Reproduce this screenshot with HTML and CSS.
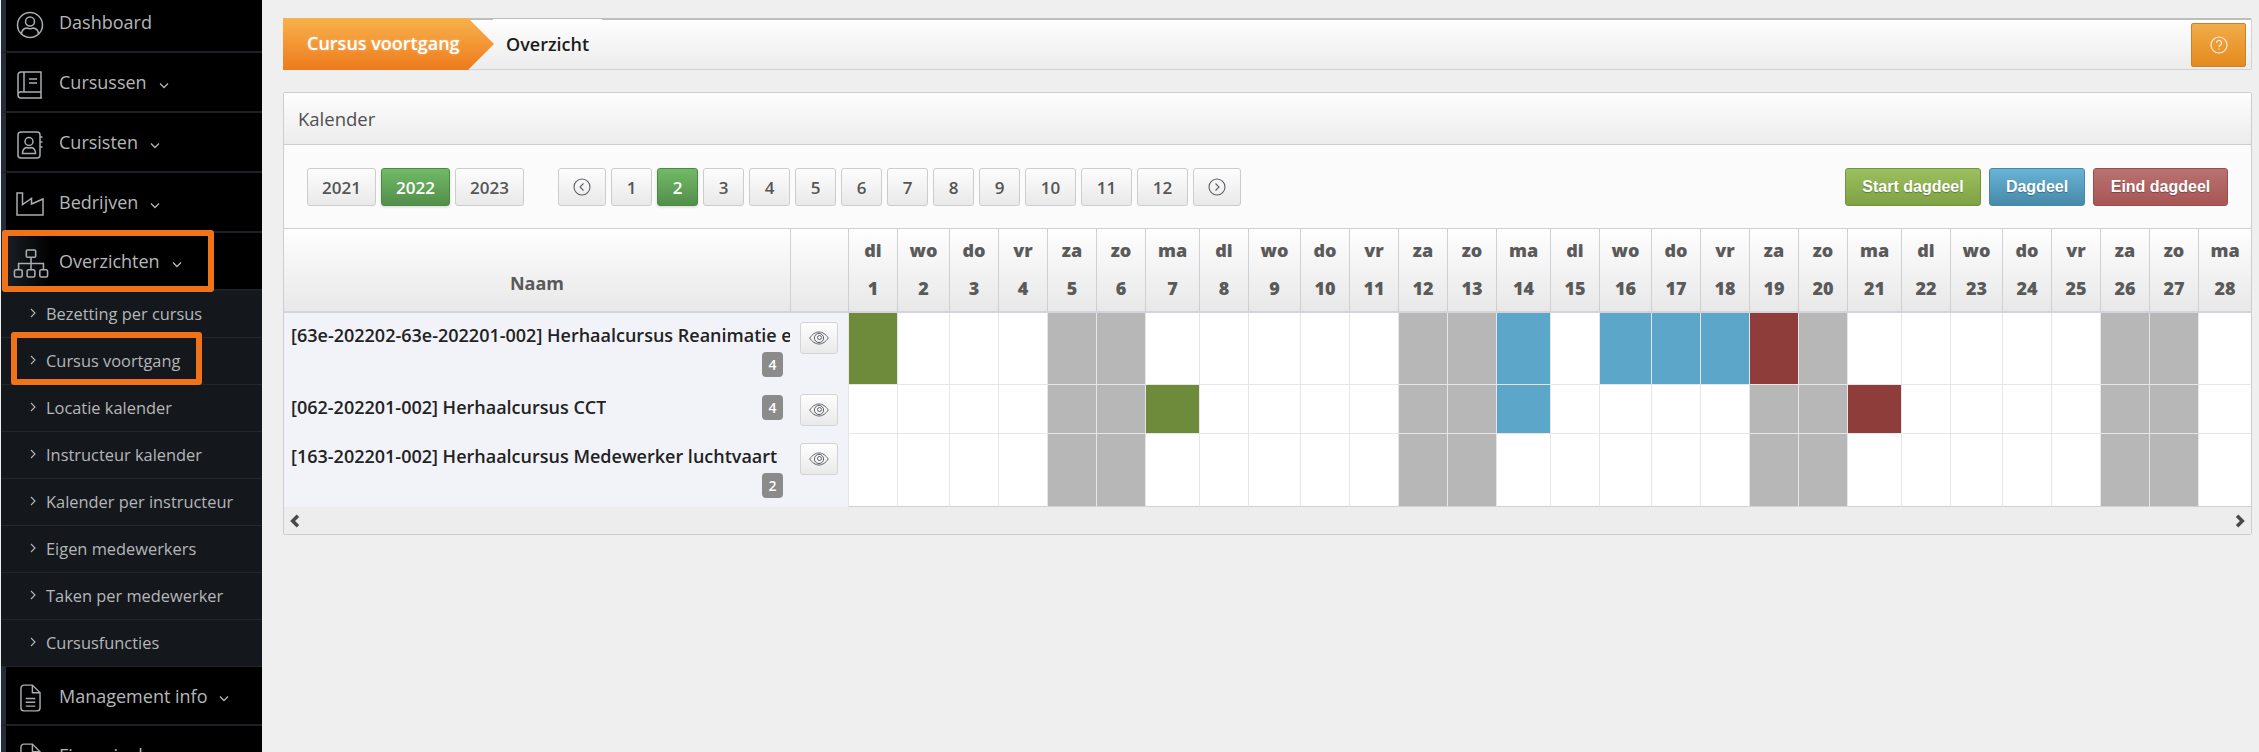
FILE: index.html
```html
<!DOCTYPE html>
<html lang="nl">
<head>
    <meta charset="UTF-8">
    <title>Cursus voortgang</title>
    <link rel="stylesheet" href="styles.css">
</head>
<body>
<svg class="defs" width="0" height="0">
    <symbol id="down" viewBox="0 0 10 6"><path d="M1 1l4 4 4-4"/></symbol>
    <symbol id="right" viewBox="0 0 6 10"><path d="M1 1l4 4-4 4"/></symbol>
    <symbol id="eye" viewBox="0 0 20 16"><path d="M.7 8c2.500-3.700 5.700-6 9.300-6s6.800 2.300 9.300 6c-2.500 3.700-5.700 6-9.300 6S3.200 11.700.7 8z"/><circle cx="10" cy="8" r="4.600"/><circle class="fill" cx="10.500" cy="7.500" r="2"/></symbol>
    <symbol id="doc" viewBox="0 0 22 29"><path d="M4 1h9l8 8v16a3 3 0 0 1-3 3H4a3 3 0 0 1-3-3V4a3 3 0 0 1 3-3z"/><path d="M13 1v8h8M6 15h10M6 19h10M6 23h10"/></symbol>
</svg>

<aside class="sidebar">
    <nav class="side-nav">
        <a class="side-item first">
            <svg class="side-icon" viewBox="0 0 28 28"><circle cx="14" cy="14" r="12.500"/><circle cx="14" cy="10.500" r="4.500"/><path d="M5.500 23.500c0-3.800 2.500-6 5-6.500 2.300 1 4.700 1 7 0 2.500.5 5 2.700 5 6.500"/></svg>
            <span>Dashboard</span>
        </a>
        <a class="side-item">
            <svg class="side-icon" viewBox="0 0 28 28"><path d="M5 1h20v20H6a3 3 0 0 0-4 3V4a3 3 0 0 1 3-3zM2 24a3 3 0 0 0 3 3h21M25 21v6M8 1v20M13 8h8M13 12h8"/></svg>
            <span>Cursussen</span>
            <svg class="caret"><use href="#down"/></svg>
        </a>
        <a class="side-item">
            <svg class="side-icon" viewBox="0 0 28 28"><rect x="2" y="1" width="22" height="26" rx="3"/><circle cx="13" cy="10.500" r="4"/><path d="M6.500 22.500c0-3.500 2-5.500 4-6 1.500.6 3.500.6 5 0 2 .5 4 2.500 4 6zM24 6h2.500M24 11h2.500M24 16h2.500"/></svg>
            <span>Cursisten</span>
            <svg class="caret"><use href="#down"/></svg>
        </a>
        <a class="side-item">
            <svg class="side-icon wide" viewBox="0 0 28 24"><path d="M1 1h5.500v11.500l9-6v5.500L27 7v16H1z"/></svg>
            <span>Bedrijven</span>
            <svg class="caret"><use href="#down"/></svg>
        </a>
        <a class="side-item open">
            <svg class="side-icon sitemap" viewBox="0 0 34 28"><rect x="12.500" y="1" width="9" height="7" rx="1"/><path d="M17 8v12M5 20v-6h24v6"/><rect x="1" y="20" width="7.500" height="7" rx="1.500"/><rect x="13.250" y="20" width="7.500" height="7" rx="1.500"/><rect x="25.500" y="20" width="7.500" height="7" rx="1.500"/></svg>
            <span>Overzichten</span>
            <svg class="caret"><use href="#down"/></svg>
        </a>
        <ul class="sub-nav">
            <li><svg class="sub-caret"><use href="#right"/></svg>Bezetting per cursus</li>
            <li><svg class="sub-caret"><use href="#right"/></svg>Cursus voortgang</li>
            <li><svg class="sub-caret"><use href="#right"/></svg>Locatie kalender</li>
            <li><svg class="sub-caret"><use href="#right"/></svg>Instructeur kalender</li>
            <li><svg class="sub-caret"><use href="#right"/></svg>Kalender per instructeur</li>
            <li><svg class="sub-caret"><use href="#right"/></svg>Eigen medewerkers</li>
            <li><svg class="sub-caret"><use href="#right"/></svg>Taken per medewerker</li>
            <li><svg class="sub-caret"><use href="#right"/></svg>Cursusfuncties</li>
        </ul>
        <a class="side-item after-sub">
            <svg class="side-icon doc"><use href="#doc"/></svg>
            <span>Management info</span>
            <svg class="caret"><use href="#down"/></svg>
        </a>
        <a class="side-item">
            <svg class="side-icon doc"><use href="#doc"/></svg>
            <span>Financieel</span>
        </a>
    </nav>
    <div class="mark mark-main"></div>
    <div class="mark mark-sub"></div>
</aside>

<main class="content">
    <div class="crumbs">
        <div class="crumb-active">Cursus voortgang</div>
        <div class="crumb-text">Overzicht</div>
        <button class="help-btn">
            <svg viewBox="0 0 18 18"><circle cx="9" cy="9" r="8"/><path d="M6.500 7a2.500 2.500 0 1 1 3.800 2.100C9.400 9.700 9 10.100 9 11M9 12.600v1.200"/></svg>
        </button>
    </div>

    <section class="panel">
        <h2 class="panel-head">Kalender</h2>
        <div class="toolbar">
            <div class="btn-row">
                <button class="btn">2021</button>
                <button class="btn on">2022</button>
                <button class="btn">2023</button>
            </div>
            <div class="btn-row months">
                <button class="btn nav"><svg viewBox="0 0 18 18"><circle cx="9" cy="9" r="8"/><path d="M10.500 5.500L7 9l3.500 3.500"/></svg></button>
                <button class="btn month">1</button>
                <button class="btn month on">2</button>
                <button class="btn month">3</button>
                <button class="btn month">4</button>
                <button class="btn month">5</button>
                <button class="btn month">6</button>
                <button class="btn month">7</button>
                <button class="btn month">8</button>
                <button class="btn month">9</button>
                <button class="btn month long">10</button>
                <button class="btn month long">11</button>
                <button class="btn month long">12</button>
                <button class="btn nav"><svg viewBox="0 0 18 18"><circle cx="9" cy="9" r="8"/><path d="M7.500 5.500L11 9l-3.500 3.500"/></svg></button>
            </div>
            <div class="btn-row legend">
                <button class="btn-key start">Start dagdeel</button>
                <button class="btn-key mid">Dagdeel</button>
                <button class="btn-key end">Eind dagdeel</button>
            </div>
        </div>

        <table class="cal">
            <thead>
                <tr>
                    <th class="col-name">Naam</th><th class="col-act"></th>
                    <th class="di">di<br>1</th><th class="wo">wo<br>2</th><th class="dg">do<br>3</th><th class="dg">vr<br>4</th><th class="dg">za<br>5</th><th class="dg">zo<br>6</th><th class="ma">ma<br>7</th>
                    <th class="di">di<br>8</th><th class="wo">wo<br>9</th><th class="dg">do<br>10</th><th class="dg">vr<br>11</th><th class="dg">za<br>12</th><th class="dg">zo<br>13</th><th class="ma">ma<br>14</th>
                    <th class="di">di<br>15</th><th class="wo">wo<br>16</th><th class="dg">do<br>17</th><th class="dg">vr<br>18</th><th class="dg">za<br>19</th><th class="dg">zo<br>20</th><th class="ma">ma<br>21</th>
                    <th class="di">di<br>22</th><th class="wo">wo<br>23</th><th class="dg">do<br>24</th><th class="dg">vr<br>25</th><th class="dg">za<br>26</th><th class="dg">zo<br>27</th><th class="ma last">ma<br>28</th>
                </tr>
            </thead>
            <tbody>
                <tr class="row-a">
                    <td class="name"><div class="name-wrap"><span class="name-text">[63e-202202-63e-202201-002] Herhaalcursus Reanimatie en AED</span><span class="badge">4</span></div></td>
                    <td class="act"><button class="eye-btn"><svg><use href="#eye"/></svg></button></td>
                    <td class="st"></td><td></td><td></td><td></td><td class="we"></td><td class="we"></td><td></td>
                    <td></td><td></td><td></td><td></td><td class="we"></td><td class="we"></td><td class="dd"></td>
                    <td></td><td class="dd"></td><td class="dd"></td><td class="dd"></td><td class="ed"></td><td class="we"></td><td></td>
                    <td></td><td></td><td></td><td></td><td class="we"></td><td class="we"></td><td></td>
                </tr>
                <tr class="row-b">
                    <td class="name"><div class="name-wrap"><span class="name-text">[062-202201-002] Herhaalcursus CCT</span><span class="badge">4</span></div></td>
                    <td class="act"><button class="eye-btn"><svg><use href="#eye"/></svg></button></td>
                    <td></td><td></td><td></td><td></td><td class="we"></td><td class="we"></td><td class="st"></td>
                    <td></td><td></td><td></td><td></td><td class="we"></td><td class="we"></td><td class="dd"></td>
                    <td></td><td></td><td></td><td></td><td class="we"></td><td class="we"></td><td class="ed"></td>
                    <td></td><td></td><td></td><td></td><td class="we"></td><td class="we"></td><td></td>
                </tr>
                <tr class="row-c">
                    <td class="name"><div class="name-wrap"><span class="name-text">[163-202201-002] Herhaalcursus Medewerker luchtvaart</span><span class="badge">2</span></div></td>
                    <td class="act"><button class="eye-btn"><svg><use href="#eye"/></svg></button></td>
                    <td></td><td></td><td></td><td></td><td class="we"></td><td class="we"></td><td></td>
                    <td></td><td></td><td></td><td></td><td class="we"></td><td class="we"></td><td></td>
                    <td></td><td></td><td></td><td></td><td class="we"></td><td class="we"></td><td></td>
                    <td></td><td></td><td></td><td></td><td class="we"></td><td class="we"></td><td></td>
                </tr>
            </tbody>
        </table>
        <div class="scrollbar">
            <svg viewBox="0 0 12 12"><path d="M8.500 1.500L4 6l4.500 4.500"/></svg>
            <svg viewBox="0 0 12 12"><path d="M3.500 1.500L8 6l-4.500 4.500"/></svg>
        </div>
    </section>
</main>
</body>
</html>
```

FILE: styles.css
```css
* {
    box-sizing: border-box;
}
html, body {
    height: 100%;
}
body {
    display: flex;
    margin: 0;
    overflow: hidden;
    font-family: "Open Sans", Arial, sans-serif;
    background-color: #efefef;
    color: #333;
}
.defs {
    position: absolute;
}

/* sidebar */
.sidebar {
    position: relative;
    flex: none;
    width: 261px;
    margin-left: 1px;
    height: 100%;
    overflow: hidden;
    background-color: #000;
}
.side-nav {
    margin-top: -8px;
}
.side-item {
    display: flex;
    align-items: center;
    height: 60px;
    padding-left: 53px;
    position: relative;
    font-size: 18px;
    color: #b4b7ba;
    border-left: 5px solid #252c39;
    border-bottom: 2px solid #1d2125;
}
.side-item.first {
    height: 61px;
}
.side-item.open {
    height: 58px;
    border-left: 0;
    padding-left: 58px;
    background: linear-gradient(to right, #1c2329, #000 50px);
}
.side-item.after-sub {
    height: 59px;
}
.side-icon {
    position: absolute;
    left: 10px;
    top: 50%;
    width: 28px;
    height: 28px;
    margin-top: -11px;
    fill: none;
    stroke: #a9adb0;
    stroke-width: 1.500;
}
.side-icon.wide {
    width: 28px;
    height: 24px;
    margin-top: -10px;
}
.side-icon.sitemap {
    left: 12px;
    width: 36px;
    height: 29px;
    margin-top: -12px;
}
.side-icon.doc {
    left: 14px;
    width: 21px;
    height: 28px;
    margin-top: -12px;
}
.caret {
    width: 10px;
    height: 7px;
    margin-left: 12px;
    margin-top: 6px;
    fill: none;
    stroke: #b4b7ba;
    stroke-width: 1.300;
}
.sub-nav {
    margin: 0;
    padding: 0;
    list-style: none;
    background-color: #14181d;
}
.sub-nav li {
    display: flex;
    align-items: center;
    height: 47px;
    padding: 0 0 2px 29px;
    font-size: 16.400px;
    color: #b5b6b7;
    border-bottom: 1px solid #22272c;
}
.sub-caret {
    width: 6px;
    height: 10px;
    margin-right: 10px;
    fill: none;
    stroke: #b5b6b7;
    stroke-width: 1.100;
}

/* orange marks drawn on top of the menu */
.mark {
    position: absolute;
    border: 6px solid #f0731a;
    border-radius: 3px;
}
.mark-main {
    left: 1px;
    top: 230px;
    width: 212px;
    height: 62px;
}
.mark-sub {
    left: 10px;
    top: 332px;
    width: 191px;
    height: 53px;
}

/* main */
.content {
    flex: 1;
    padding: 18px 7px 0 21px;
}
.crumbs {
    position: relative;
    display: flex;
    align-items: center;
    height: 52px;
    border: 1px solid #d2d2d2;
    border-top: 2px solid #bdbdbd;
    border-radius: 2px;
    background: linear-gradient(to bottom, #fefefe, #ececec);
}
/* the top line is thinner right behind the active crumb */
.crumbs::before {
    content: "";
    position: absolute;
    left: 209px;
    top: -1px;
    width: 109px;
    height: 1px;
    background-color: #fefefe;
}
.crumb-active {
    flex: none;
    align-self: stretch;
    position: relative;
    width: 211px;
    margin: -2px 0 -1px -1px;
    padding-left: 24px;
    line-height: 50px;
    font-size: 18px;
    font-weight: 600;
    color: #fff;
    text-shadow: 0 0 3px rgba(255, 255, 255, 0.4);
    background: linear-gradient(to bottom, #f7b24c, #ee7a1c);
    clip-path: polygon(0 0, 185px 0, 100% 50%, 185px 100%, 0 100%);
}
.crumb-text {
    margin-left: 12px;
    padding-bottom: 2px;
    font-size: 18px;
    font-weight: 600;
    color: #1b1b1b;
}
.help-btn {
    display: flex;
    align-items: center;
    justify-content: center;
    width: 55px;
    height: 44px;
    margin-left: auto;
    margin-right: 5px;
    padding: 0;
    border: 1px solid #c9822a;
    border-radius: 2px;
    background: linear-gradient(to bottom, #f1ac49, #e48a1e);
}
.help-btn svg {
    width: 18px;
    height: 18px;
    fill: none;
    stroke: #fbeedd;
    stroke-width: 1.200;
}

.panel {
    margin-top: 22px;
    border: 1px solid #cdcdcd;
    border-radius: 2px;
    background-color: #fbfbfb;
}
.panel-head {
    height: 52px;
    margin: 0;
    padding-left: 14px;
    line-height: 52px;
    font-size: 18.500px;
    font-weight: 500;
    color: #4f4f4f;
    border-bottom: 1px solid #cdcdcd;
    background: linear-gradient(to bottom, #fdfdfd, #ececec);
}
.toolbar {
    display: flex;
    height: 83px;
    padding: 23px 23px 0;
}
.btn-row {
    display: flex;
    gap: 5px;
}
.months {
    margin-left: 34px;
}
.legend {
    margin-left: auto;
    gap: 8px;
}
.btn {
    display: flex;
    align-items: center;
    justify-content: center;
    width: 69px;
    height: 38px;
    padding: 0;
    font-family: inherit;
    font-size: 17px;
    font-weight: 600;
    color: #555;
    border: 1px solid #ccc;
    border-radius: 3px;
    background: linear-gradient(to bottom, #fdfdfd, #e9e9e9);
}
.btn.month {
    width: 41px;
}
.btn.long {
    width: 51px;
}
.btn.nav {
    width: 48px;
}
.btn.nav svg {
    width: 18px;
    height: 18px;
    fill: none;
    stroke: #5a5f66;
    stroke-width: 1.100;
}
.btn.on {
    color: #fff;
    border-color: #4c8a44;
    background: linear-gradient(to bottom, #72b968, #528f4a);
    box-shadow: 0 1px 3px rgba(0, 0, 0, 0.15);
}
.btn-key {
    height: 38px;
    padding: 0;
    font-family: "Liberation Sans", Arial, sans-serif;
    font-size: 16px;
    font-weight: 700;
    color: #fff;
    text-shadow: 0 1px 1px rgba(0, 0, 0, 0.3);
    border-radius: 3px;
    border: 1px solid;
}
.btn-key.start {
    width: 136px;
    border-color: #6f9441;
    background: linear-gradient(to bottom, #9cbf5f, #7ea244);
}
.btn-key.mid {
    width: 96px;
    border-color: #468aa8;
    background: linear-gradient(to bottom, #68b3d6, #4789a9);
}
.btn-key.end {
    width: 135px;
    border-color: #984e4e;
    background: linear-gradient(to bottom, #b87370, #a85555);
}

/* calendar table */
.cal {
    width: 1967px;
    table-layout: fixed;
    border-collapse: separate;
    border-spacing: 0;
}
.cal th {
    height: 85px;
    padding: 0 0 4px;
    vertical-align: bottom;
    text-align: center;
    line-height: 38px;
    font-size: 18px;
    font-weight: 800;
    color: #5a5a5a;
    border-top: 1px solid #cfcfd6;
    border-left: 1px solid #cfcfd6;
    border-bottom: 2px solid #d4d4da;
    background: linear-gradient(to bottom, #fefefe, #e8e8e8);
}
.cal th.col-name {
    width: 506px;
    padding-bottom: 16px;
    line-height: 24px;
    font-weight: 700;
    border-left: 0;
}
.cal th.col-act {
    width: 58px;
}
.cal th.di,
.cal th.dg {
    width: 49px;
}
.cal th.wo {
    width: 52px;
}
.cal th.ma {
    width: 54px;
}
.cal th.last {
    width: 53px;
}
.cal td {
    padding: 0;
    background-color: #fff;
    border-left: 1px solid #e6e6e8;
    border-bottom: 1px solid #e6e6e8;
}
.row-a td {
    height: 72px;
}
.row-b td {
    height: 49px;
}
.row-c td {
    height: 73px;
}
.row-c td {
    border-bottom-color: #cfcfd6;
}
.cal td.name,
.cal td.act {
    vertical-align: top;
    background-color: #f1f3f8;
    border-left: 0;
    border-bottom: 0;
}
.cal td.we {
    background-color: #b7b7b7;
}
.cal td.st {
    background-color: #6d8b3b;
}
.cal td.dd {
    background-color: #5ba6c9;
}
.cal td.ed {
    background-color: #8f3d3a;
}
.name-wrap {
    display: flex;
    flex-wrap: wrap;
    align-items: center;
    padding: 7px 0 0 7px;
    row-gap: 2px;
    overflow: hidden;
}
.name-text {
    max-width: 499px;
    line-height: 30px;
    font-size: 18px;
    font-weight: 600;
    color: #222;
    white-space: nowrap;
    overflow: hidden;
}
.badge {
    width: 21px;
    height: 25px;
    margin-left: auto;
    margin-right: 7px;
    line-height: 25px;
    text-align: center;
    font-size: 14px;
    font-weight: 600;
    color: #fff;
    border-radius: 4px;
    background-color: #8b8b8b;
}
.act {
    text-align: left;
}
.eye-btn {
    display: flex;
    align-items: center;
    justify-content: center;
    width: 38px;
    height: 32px;
    margin: 9px 0 0 10px;
    padding: 0;
    border: 1px solid #d4d4d4;
    border-radius: 3px;
    background: linear-gradient(to bottom, #fefefe, #e9e9e9);
}
.eye-btn svg {
    width: 20px;
    height: 16px;
    fill: none;
    stroke: #5f646a;
    stroke-width: 1;
}
.eye-btn .fill {
    fill: #5f646a;
}
.scrollbar {
    display: flex;
    justify-content: space-between;
    align-items: center;
    height: 27px;
    padding: 0 4px;
    background-color: #ededed;
}
.scrollbar svg {
    width: 14px;
    height: 14px;
    fill: none;
    stroke: #4a4a4a;
    stroke-width: 3;
}
```
